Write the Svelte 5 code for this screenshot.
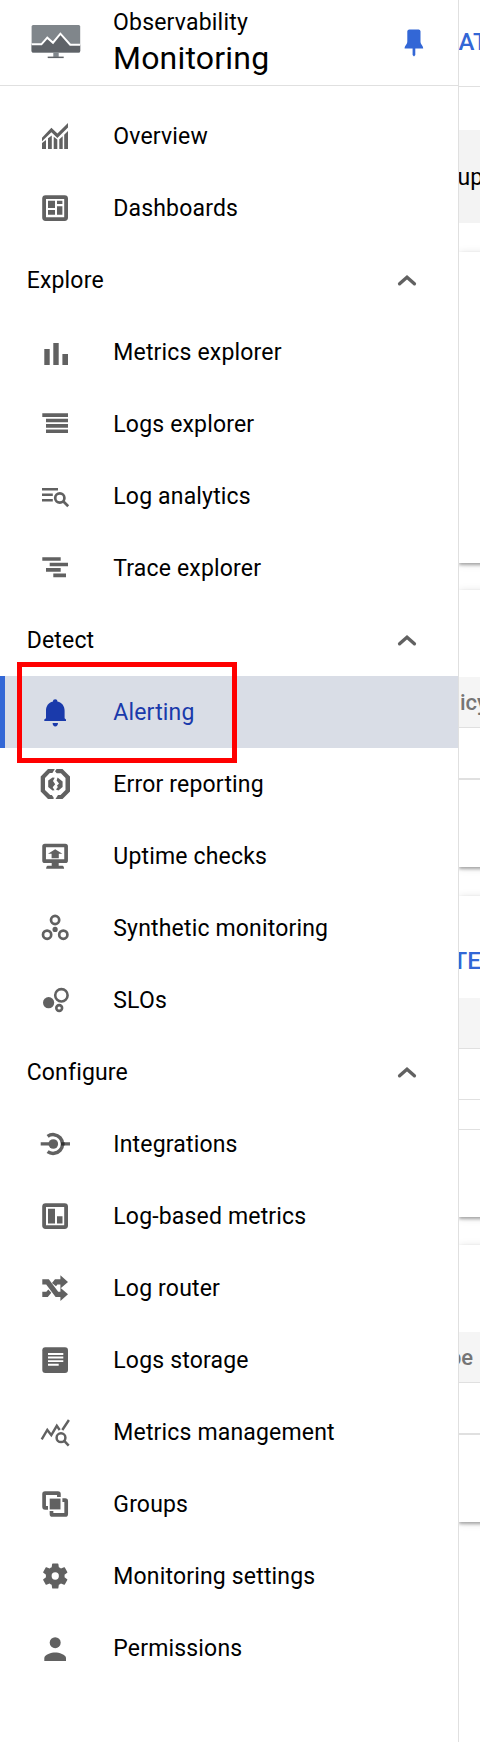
<script>
  const groups = [
    { title: '', items: [['overview', 'Overview'], ['dashboards', 'Dashboards']] },
    { title: 'Explore', items: [['metrics', 'Metrics explorer'], ['logs', 'Logs explorer'], ['analytics', 'Log analytics'], ['trace', 'Trace explorer']] },
    { title: 'Detect', items: [['bell', 'Alerting'], ['error', 'Error reporting'], ['uptime', 'Uptime checks'], ['synthetic', 'Synthetic monitoring'], ['slo', 'SLOs']] },
    { title: 'Configure', items: [['integrations', 'Integrations'], ['logmetrics', 'Log-based metrics'], ['router', 'Log router'], ['storage', 'Logs storage'], ['management', 'Metrics management'], ['groups', 'Groups'], ['settings', 'Monitoring settings'], ['person', 'Permissions']] }
  ];
  const icons = {
    overview: '<path d="M3 17.7L12.4 7.7l6 5.8L29 3v4.6L18.4 18l-6-5.8L3 21.2zM3 23l4-3v9H3zM9 18.2l3.8-2.8V29H9zM14.7 16.8l3.6 2.8V29h-3.6zM20.3 19.2l3.4-3V29h-3.4zM25.2 14.7L29 11v18h-3.8z"/>',
    dashboards: '<rect x="5.1" y="5.1" width="22" height="22" rx="1.5" fill="none" stroke="currentColor" stroke-width="3.8"/><path d="M9 8.7h7V16H9zM18 8.7h5.4V12H18zM9 18h7v4.7H9zM18 14.3h5.4v8.4H18z"/>',
    metrics: '<path d="M5.3 13h5.4v16H5.3zM14.3 7h5.4v22h-5.4zM23.4 18H29v11h-5.6z"/>',
    logs: '<path d="M3.3 5.2H29v3.7H3.3zM7 10.7h22v3.6H7zM7 16.1h22v3.6H7zM7 21.5h22v3.6H7z"/>',
    analytics: '<path d="M3 8h16v2.6H3zM3 13.5h10.8v2.6H3zM3 19h10.8v2.6H3z"/><g fill="none" stroke="currentColor" stroke-width="2.7"><circle cx="20.8" cy="18" r="4.6"/><path d="M24.2 21.2l5 5"/></g>',
    trace: '<path d="M3.3 5.2h18.4v3.6H3.3zM10.7 10.7H29v3.6H10.7zM7 16.1h14.7v3.6H7zM14.3 21.6H27v3.6H14.3z"/>',
    bell: '<path d="M16.2 3.2c1.4 0 2.2.9 2.2 2.2 4.8 1.2 7.2 4.7 7.2 9.2v7.6l1.4 1.2V25H5.3v-1.6L7 22.2v-7.6c0-4.5 2.3-8 7-9.2 0-1.3.8-2.2 2.2-2.2zM13.6 27H19c0 2-1.2 3.5-2.7 3.5S13.6 29 13.6 27z"/>',
    error: '<path d="M9 1h6.8l-2.4 4H10.800L6 10v12l5.200 5h1.600l1.800 2.500V31H9l-7.300-7.500v-15zM17.500 1H23.500l7.500 7.500v15L23.500 31H16.500l2.500-4h2.500l5-5V10l-4.600-4.800h-4.200L16 3.200zM13.500 9.500l2.200.2-1.700 3.300 2.200 3.300-2.500 3 1.800 3-2 .2-4.300-3.500v-6.500zM18.600 9.500l5 4v5.500l-4.200 3.600-2.400-1.100 1.900-2.500-1-1.200 2.100-2.400-2.400-3z"/>',
    uptime: '<rect x="5.100" y="5.500" width="22" height="15.700" rx=".8" fill="none" stroke="currentColor" stroke-width="3.700"/><path d="M12.700 22h7v3.700h4q1.400.4 1.400 3h-18q0-2.600 1.400-3h4.200zM16.200 9.200l7.200 4.600h-3.600v4.400h-7.200v-4.400H9z"/>',
    synthetic: '<g fill="none" stroke="currentColor" stroke-width="2.700"><circle cx="16.100" cy="8" r="4.100"/><circle cx="8.100" cy="22.700" r="4.100"/><circle cx="24.300" cy="22.700" r="4.100"/></g><circle cx="16.100" cy="17.400" r="2.600"/>',
    slo: '<circle cx="9.600" cy="18.700" r="5.600"/><g fill="none" stroke="currentColor"><circle cx="22.400" cy="11.300" r="6.200" stroke-width="2.600"/><circle cx="20.200" cy="24" r="2.900" stroke-width="2.600"/></g>',
    integrations: '<path d="M1.700 14.300h9v3.200h-9zM22 14.300h9v3.200h-9z"/><circle cx="14.300" cy="16" r="4.800"/><path d="M8.600 8.400a9.400 9.400 0 1 1 0 15.200" fill="none" stroke="currentColor" stroke-width="3.500"/><path d="M22 14.300h3.600v3.200H22z" fill="#303030"/>',
    logmetrics: '<rect x="5.100" y="5.100" width="22" height="22" rx="1.500" fill="none" stroke="currentColor" stroke-width="3.800"/><path d="M9 8.700h7v14.700H9zM18 16.200h5.500v7.200H18z"/>',
    router: '<g fill="none" stroke="currentColor" stroke-width="5.200"><path d="M3.300 9.900h5.200l9.400 12.400H23M15 12.600l2.200-2.700H23"/></g><path d="M3.300 19.700h4l2-2.300 3 3.400-3.500 4.200H3.300zM21.400 3.300l7.600 6.600-7.600 6.600zM21.400 15.700l7.600 6.600-7.600 6.600z"/>',
    storage: '<rect x="3.300" y="3.300" width="25.700" height="25.600" rx="3"/><path d="M9 9h15.300v1.900H9zM9 12.600h15.300v1.900H9zM9 16.200h15.300v1.900H9zM9 19.800h10.700v1.900H9z" fill="#fff"/>',
    management: '<g fill="none" stroke="currentColor"><path d="M2.700 23.300L8.300 14l4 5.200 5.500-9.400 2.900 4.200M23.300 14L29.900 4" stroke-width="2.400"/><circle cx="22" cy="21.700" r="4.400" stroke-width="2.500"/><path d="M25 24.700l4.700 4.900" stroke-width="2.500"/></g>',
    groups: '<g fill="none" stroke="currentColor" stroke-width="3.700"><path d="M19.900 9V6.100q0-1-1-1H6.100q-1 0-1 1v12.700q0 1 1 1H9M23.400 12.200h2.800q1 0 1 1v12.700q0 1-1 1H13.500q-1 0-1-1V23"/></g><path d="M10.700 10.600h10.800v10.800H10.700z"/>',
    settings: '<g transform="translate(.65 .4) scale(1.300)"><path d="M19.140 12.940c.04-.3.060-.610.060-.940s-.020-.640-.070-.940l2.030-1.580c.180-.140.230-.410.120-.610l-1.920-3.320c-.120-.220-.370-.290-.590-.220l-2.390.960c-.5-.380-1.030-.7-1.620-.940l-.360-2.540c-.040-.240-.240-.410-.480-.410h-3.840c-.240 0-.430.170-.470.410l-.360 2.540c-.590.240-1.130.570-1.620.940l-2.390-.960c-.220-.080-.470 0-.590.220L2.740 8.870c-.120.210-.080.470.120.610l2.030 1.580c-.050.300-.090.630-.090.940s.020.640.070.940l-2.030 1.580c-.180.140-.230.410-.120.610l1.920 3.320c.120.220.370.290.590.220l2.390-.960c.5.380 1.030.7 1.620.940l.360 2.540c.050.240.240.410.480.410h3.840c.240 0 .440-.170.470-.410l.360-2.540c.590-.240 1.130-.560 1.620-.940l2.390.960c.220.080.470 0 .590-.220l1.920-3.320c.120-.220.070-.470-.120-.610zM12 14.800a2.800 2.800 0 1 1 0-5.600 2.800 2.800 0 0 1 0 5.600z"/></g>',
    person: '<circle cx="16.200" cy="10.700" r="5.500"/><path d="M5.300 29v-3c0-3.600 7.300-5.600 10.900-5.600S27 22.400 27 26v3z"/>'
  };
</script>

<div class="page">
  <nav>
    <header>
      <svg class="logo" width="50" height="36" viewBox="0 0 50 36">
        <rect x=".6" y="1" width="48.600" height="27.400" rx="1.500" fill="#80868b" />
        <path d="M.6 20.300h9.800l5.900-6.600 5.700 5 7.400-9 9.800 11h10v6.200q0 1.500-1.500 1.500H2.100q-1.500 0-1.500-1.500z" fill="#5f6368" />
        <path d="M.6 20.300h9.800l5.900-6.600 5.700 5 7.400-9 9.800 11h10" fill="none" stroke="#fff" stroke-width="2" />
        <path d="M22.300 28.400h5.400v4.500h-5.400z" fill="#80868b" /><path d="M16.700 32.600h16v1.500h-16z" fill="#5f6368" />
      </svg>
      <div class="heading"><span>Observability</span><strong>Monitoring</strong></div>
      <svg class="pin" width="20" height="28" viewBox="0 0 20 28" fill="#3367d6"><path d="M5.300.6h9.400q1.600 0 1.800 1.600v10.200c0 3 2.700 3.800 2.700 7.200H.600c0-3.400 2.700-4.200 2.700-7.200V2.200Q3.500.6 5.300.6zM8.600 19h2.700v7l-1.300 1.600L8.600 26z" /></svg>
    </header>
    <div class="menu">
      {#each groups as group}
        {#if group.title}
          <div class="section"><span>{group.title}</span><svg width="20" height="14" viewBox="0 0 20 14"><path d="M2.600 10.800L10 4.200l7.400 6.600" fill="none" stroke="#616161" stroke-width="3.400" stroke-linecap="round" /></svg></div>
        {/if}
        {#each group.items as [icon, label]}
          <div class="item" class:selected={icon === 'bell'}>
            <svg width="32" height="32" viewBox="0 0 32 32" fill="currentColor">{@html icons[icon]}</svg>
            <span>{label}</span>
            {#if icon === 'bell'}<i class="highlight"></i>{/if}
          </div>
        {/each}
      {/each}
    </div>
  </nav>
  <main>
    <div class="toolbar">AT</div>
    <div class="notice">up</div>
    <section class="card one"></section>
    <section class="card two"><div class="th">icy</div><div class="row thick"></div></section>
    <section class="card three"><div class="action">TE</div><div class="th"></div><div class="row"></div><div class="gap"></div></section>
    <section class="card four"><div class="th"><span>pe</span></div><div class="row thick"></div></section>
  </main>
</div>

<style>
  :global(body) { background: #fff; }
  .page { display: flex; width: 480px; height: 1742px; overflow: hidden; font-family: Roboto, sans-serif; font-size: 23px; color: #000; }
  nav { box-sizing: border-box; width: 459px; flex: none; border-right: 1px solid #e0e0e0; }
  header { box-sizing: border-box; height: 86px; display: flex; border-bottom: 1px solid #e0e0e0; padding-left: 31px; }
  .logo { margin-top: 24px; flex: none; }
  .heading { display: flex; flex-direction: column; margin-left: 32px; width: 291px; white-space: nowrap; letter-spacing: .2px; }
  .heading span { line-height: 30px; margin-top: 8px; }
  .heading strong { font-size: 32px; line-height: 40px; font-weight: 400; letter-spacing: .2px; }
  .pin { margin-top: 29px; flex: none; }
  .menu { padding-top: 14px; }
  .item, .section { height: 72px; display: flex; align-items: center; white-space: nowrap; letter-spacing: .17px; }
  .item { padding-left: 39px; gap: 42.300px; position: relative; }
  .item svg { color: #616161; flex: none; }
  .section { justify-content: space-between; padding: 0 41px 0 26.700px; }
  .selected { background: #d9dde6; color: #1a3aab; box-shadow: inset 5px 0 #3367d6; }
  .selected svg { color: #1a3aab; }
  .highlight { position: absolute; box-sizing: border-box; left: 16.500px; top: -14.500px; width: 220px; height: 101.500px; border: 5px solid #f00; z-index: 2; }
  main { width: 21px; overflow: hidden; flex: none; }
  .toolbar { height: 86px; line-height: 84px; border-bottom: 1px solid #e0e0e0; color: #3367d6; font-weight: 500; font-size: 24px; text-indent: -.500px; }
  .notice { margin-top: 43px; height: 93px; background: #f3f3f3; line-height: 95px; text-indent: -1.500px; }
  .card { box-sizing: border-box; margin-right: -30px; background: #fff; box-shadow: 0 2px 3px rgba(0,0,0,.3), 0 1px 8px rgba(0,0,0,.13); overflow: hidden; }
  .one { height: 311px; margin-top: 29px; }
  .two { height: 277px; margin-top: 27px; padding-top: 87px; }
  .three { height: 321px; margin-top: 29px; }
  .four { height: 277px; margin-top: 28px; padding-top: 87px; }
  .th { height: 50px; background: #f5f5f5; border-bottom: 1px solid #e0e0e0; color: #757575; font-weight: 500; font-size: 22px; line-height: 51px; text-indent: 1px; }
  .th span { margin-left: -11px; }
  .row { height: 50px; border-bottom: 1px solid #e0e0e0; }
  .thick { border-bottom-width: 2px; }
  .gap { height: 29px; border-bottom: 1px solid #e0e0e0; }
  .action { height: 102px; line-height: 131px; color: #3367d6; font-weight: 500; font-size: 24px; text-indent: -6.500px; }
</style>
